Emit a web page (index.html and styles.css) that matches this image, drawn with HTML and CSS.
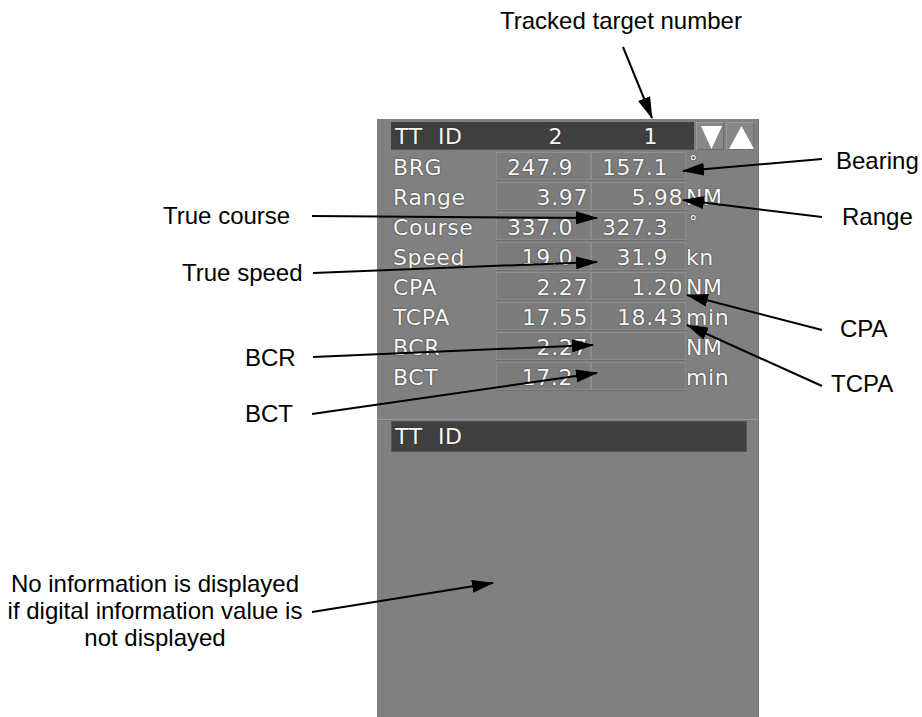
FILE: index.html
```html
<!DOCTYPE html>
<html>
<head>
  <title>TT data display</title>
  <link rel="stylesheet" href="styles.css">
</head>
<body>
  <div class="sheet">
    <div class="panel">
      <div class="head">
        <div class="bar grid">
          <span class="lbl">TT&nbsp;&nbsp;ID</span>
          <span class="num">2</span>
          <span class="num">1</span>
        </div>
        <div class="btn">
          <svg width="28" height="28" viewBox="0 0 28 28"><polygon points="5,4 26,4 15.5,27" fill="#fff"/></svg>
        </div>
        <div class="btn">
          <svg width="28" height="28" viewBox="0 0 28 28"><polygon points="3,27 28,27 15.5,4" fill="#fff"/></svg>
        </div>
      </div>

      <div class="grid table">
        <span class="lbl">BRG</span><span class="val pad">247.9</span><span class="val pad">157.1</span><span class="unit deg">°</span>
        <span class="lbl">Range</span><span class="val">3.97</span><span class="val">5.98</span><span class="unit">NM</span>
        <span class="lbl">Course</span><span class="val pad">337.0</span><span class="val pad">327.3</span><span class="unit deg">°</span>
        <span class="lbl">Speed</span><span class="val pad">19.0</span><span class="val pad">31.9</span><span class="unit">kn</span>
        <span class="lbl">CPA</span><span class="val">2.27</span><span class="val">1.20</span><span class="unit">NM</span>
        <span class="lbl">TCPA</span><span class="val">17.55</span><span class="val">18.43</span><span class="unit">min</span>
        <span class="lbl">BCR</span><span class="val">2.27</span><span class="val"></span><span class="unit">NM</span>
        <span class="lbl">BCT</span><span class="val pad">17.2</span><span class="val"></span><span class="unit">min</span>
      </div>

      <div class="sep"></div>
      <div class="bar wide"><span class="lbl">TT&nbsp;&nbsp;ID</span></div>
    </div>

    <!-- callouts -->
    <div class="note title">Tracked target number</div>
    <div class="note n-bearing">Bearing</div>
    <div class="note n-range">Range</div>
    <div class="note n-course">True course</div>
    <div class="note n-speed">True speed</div>
    <div class="note n-cpa">CPA</div>
    <div class="note n-tcpa">TCPA</div>
    <div class="note n-bcr">BCR</div>
    <div class="note n-bct">BCT</div>
    <div class="note n-none">No information is displayed<br>if digital information value is<br>not displayed</div>

    <svg class="arrows" width="922" height="717" viewBox="0 0 922 717">
      <defs>
        <marker id="head" markerUnits="userSpaceOnUse" markerWidth="22" markerHeight="13" viewBox="0 0 22 13" refX="21" refY="6.5" orient="auto">
          <path d="M0,0 L22,6.5 L0,13 z" fill="#000"/>
        </marker>
      </defs>
      <g stroke="#000" stroke-width="2" marker-end="url(#head)">
        <line x1="623" y1="47" x2="652" y2="118"/>
        <line x1="822" y1="159" x2="683" y2="171"/>
        <line x1="822" y1="217" x2="683" y2="200"/>
        <line x1="312" y1="216" x2="597" y2="218"/>
        <line x1="313" y1="273" x2="597" y2="262"/>
        <line x1="822" y1="330" x2="687" y2="295"/>
        <line x1="822" y1="386" x2="687" y2="325"/>
        <line x1="313" y1="357" x2="593" y2="345"/>
        <line x1="312" y1="414" x2="597" y2="373"/>
        <line x1="312" y1="612" x2="493" y2="583"/>
      </g>
    </svg>
  </div>
</body>
</html>
```

FILE: styles.css
```css
body {
  margin: 0;
  background-color: #fff;
  font-family: "Liberation Sans", Arial, sans-serif;
}

.sheet {
  position: relative;
  width: 922px;
  height: 717px;
  padding: 119px 0 0 377px;
  box-sizing: border-box;
  overflow: hidden;
}

/* radar TT panel */
.panel {
  width: 382px;
  height: 598px;
  box-sizing: border-box;
  padding: 3px 4px 0 14px;
  background-color: #808080;
  border-right: 1px solid #747474;
  font-family: "DejaVu Sans", sans-serif;
  font-size: 22px;
  letter-spacing: 0.6px;
  color: #f8f8f8;
  text-shadow: 0 0 1px #333, 0 0 2px rgba(0, 0, 0, 0.4);
}

.head {
  display: flex;
  gap: 2px;
  height: 28px;
}

.grid {
  display: grid;
  grid-template-columns: 105px 95px 95px 1fr;
}

.bar {
  background-color: #404040;
  box-shadow: inset 0 -1px 0 #555;
  line-height: 29px;
}

.head .bar {
  width: 306px;
}

.bar .lbl {
  padding-left: 4px;
}

.num {
  text-align: right;
  padding-right: 28px;
}

.btn {
  width: 28px;
  height: 28px;
  background-color: #878787;
  box-shadow: inset 1px 1px 0 #9a9a9a, inset -1px -1px 0 #6e6e6e;
}

.btn svg {
  display: block;
}

.table {
  margin-top: 2px;
  grid-auto-rows: 28px;
  row-gap: 2px;
  line-height: 31px;
}

.table .lbl {
  padding-left: 2px;
}

.val {
  text-align: right;
  padding-right: 3px;
  background-color: #7c7c7c;
  box-shadow: inset 1px 1px 0 #8e8e8e, inset -1px -1px 0 #8a8a8a, 0 1px 0 #6f6f6f;
}

.val.pad {
  padding-right: 18px;
}

.unit {
  padding-left: 0;
}

.deg {
  padding-left: 3px;
  line-height: 20px;
  font-size: 17px;
}

.sep {
  margin-top: 29px;
  margin-left: -14px;
  margin-right: -4px;
  height: 1px;
  background-color: #9a9a9a;
  border-bottom: 1px solid #7a7a7a;
}

.bar.wide {
  width: 356px;
  height: 31px;
  line-height: 31px;
  box-shadow: inset 0 0 0 1px #555;
}

/* callout texts */
.note {
  position: absolute;
  font-size: 24px;
  line-height: 27px;
  color: #000;
  white-space: nowrap;
}

.title { left: 500px; top: 7px; }
.n-bearing { left: 836px; top: 147px; }
.n-range { left: 842px; top: 203px; }
.n-course { left: 163px; top: 202px; }
.n-speed { left: 182px; top: 259px; }
.n-cpa { left: 840px; top: 315px; }
.n-tcpa { left: 831px; top: 370px; }
.n-bcr { left: 245px; top: 344px; }
.n-bct { left: 245px; top: 400px; }

.n-none {
  left: 5px;
  top: 570px;
  width: 300px;
  text-align: center;
}

.arrows {
  position: absolute;
  left: 0;
  top: 0;
  pointer-events: none;
}
```
